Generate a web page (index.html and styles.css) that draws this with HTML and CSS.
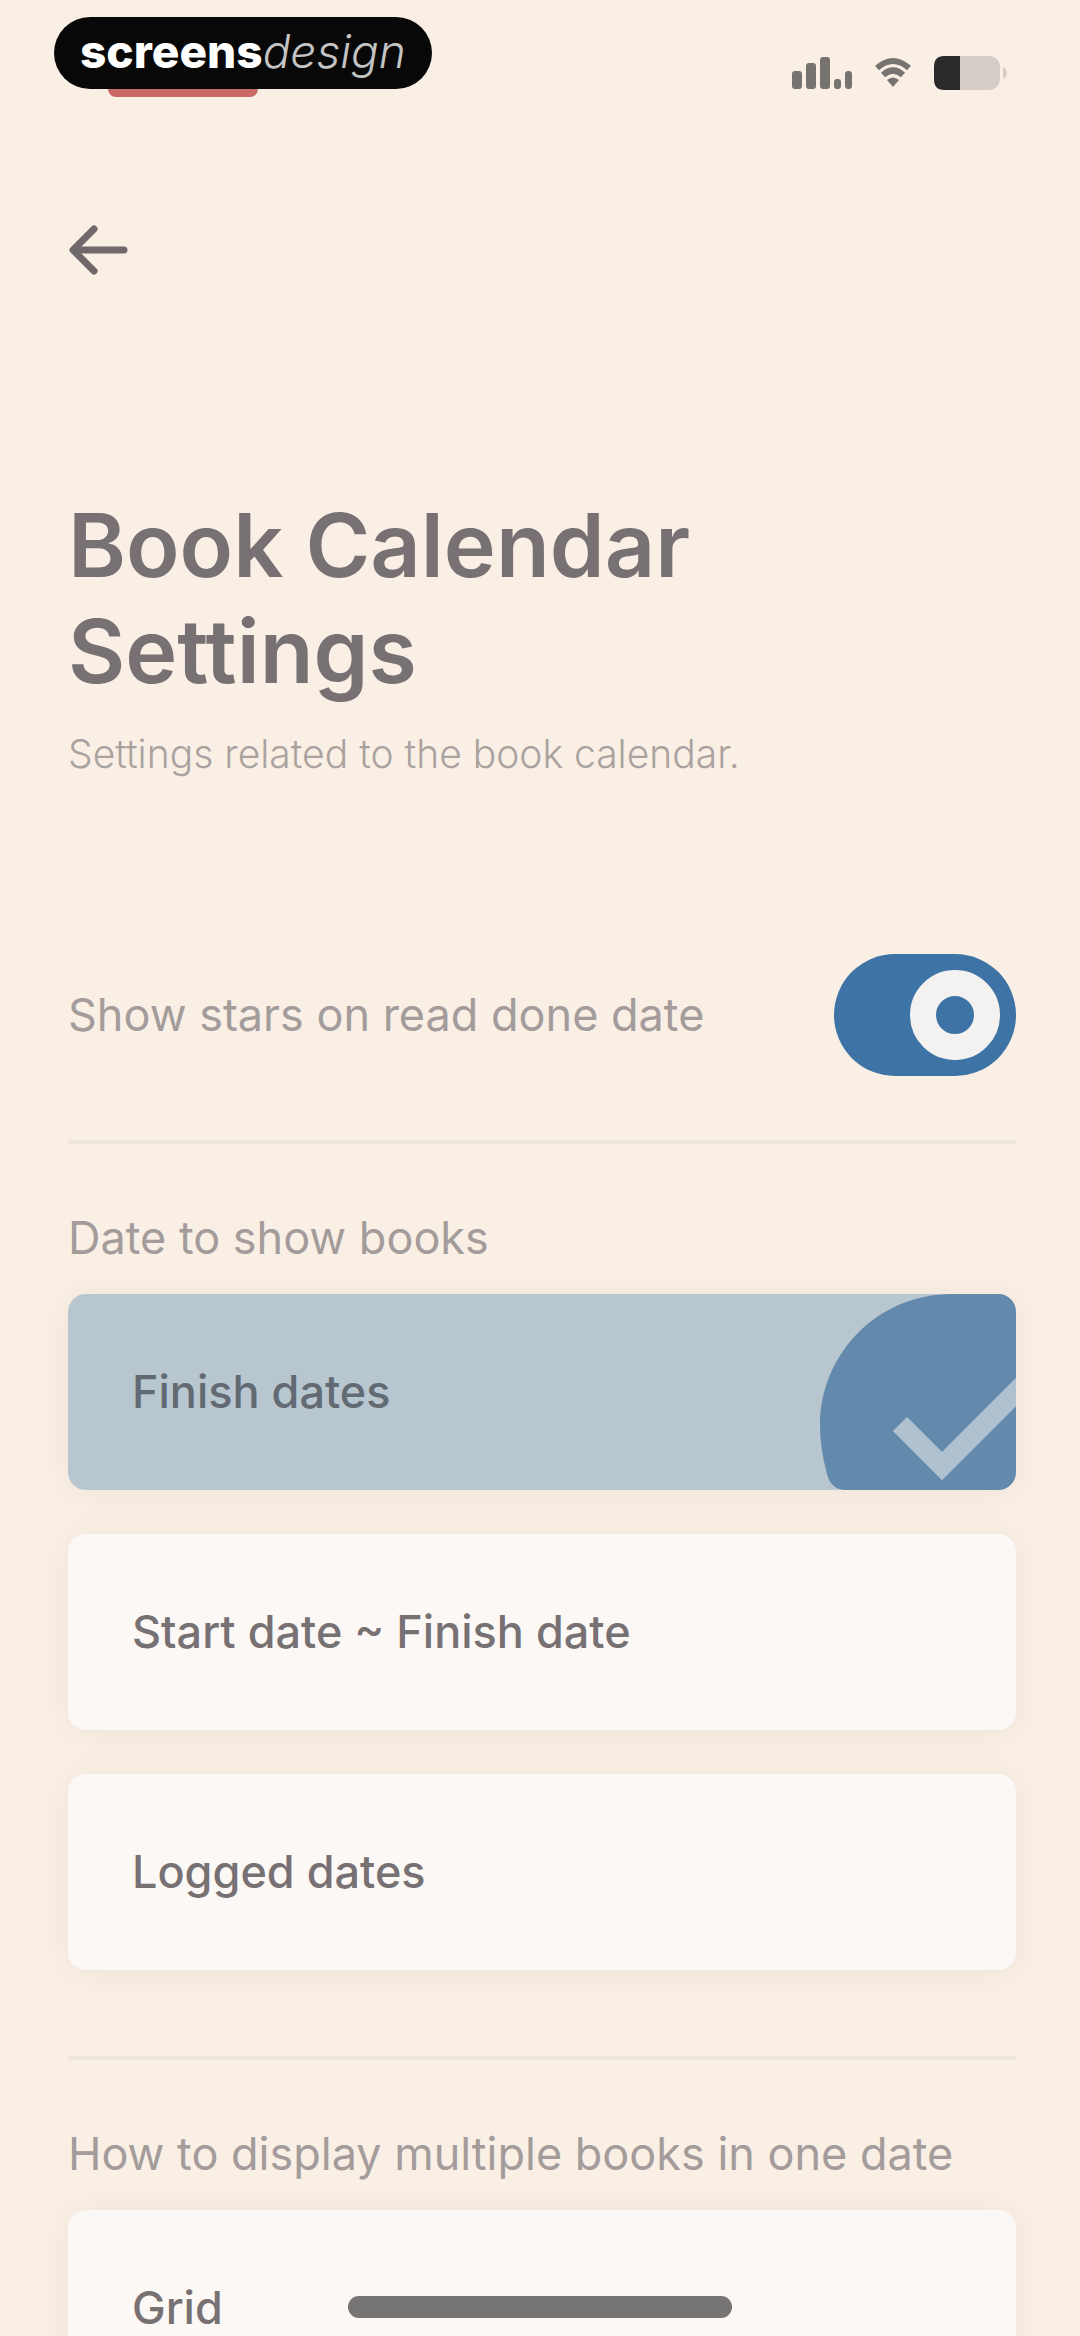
FILE: index.html
```html
<!doctype html>
<html lang="en">
<head>
  <meta charset="UTF-8" />
  <meta name="viewport" content="width=device-width, initial-scale=1.0" />
  <title>Book Calendar Settings</title>
  <link rel="stylesheet" href="styles.css">
</head>
<body>
  <div class="screen">
    <header class="status-bar">
      <div class="brand"><strong>screens</strong><em>design</em></div>
      <div class="status-icons">
        <svg class="signal" viewBox="0 0 62 36" aria-hidden="true">
          <rect x="0" y="16" width="10" height="18" rx="3" />
          <rect x="14" y="8" width="10" height="26" rx="3" />
          <rect x="28" y="2" width="10" height="32" rx="3" />
          <rect x="42" y="24" width="7" height="10" rx="3" />
          <rect x="53" y="16" width="7" height="18" rx="3" />
        </svg>
        <svg class="wifi" viewBox="0 0 38 32" aria-hidden="true">
          <path d="M3 11 Q19 -3 35 11 M9 18 Q19 9 29 18" />
          <path class="dot" d="M13 23 Q19 18 25 23 L19 30 Z" />
        </svg>
        <svg class="battery" viewBox="0 0 76 38" aria-hidden="true">
          <rect class="battery-body" x="2" y="2" width="66" height="34" rx="11" />
          <path class="battery-level" d="M28 2 H12 Q2 2 2 13 V25 Q2 36 12 36 H28 Z" />
          <path class="battery-cap" d="M71 13 Q75 15 75 19 Q75 23 71 25 Z" />
        </svg>
      </div>
    </header>

    <nav class="top-nav">
      <button type="button" class="back-btn" aria-label="Back">
        <svg viewBox="0 0 60 52" aria-hidden="true">
          <path d="M56 26 H6 M26 5 L5 26 L26 47" />
        </svg>
      </button>
    </nav>

    <main class="content">
      <h1>Book Calendar<br />Settings</h1>
      <p class="subtitle">Settings related to the book calendar.</p>

      <div class="toggle-row">
        <label for="show-stars">Show stars on read done date</label>
        <input type="checkbox" id="show-stars" class="toggle" checked />
      </div>

      <hr />

      <fieldset class="option-group">
        <legend>Date to show books</legend>
        <label class="option">
          <input type="radio" name="date-mode" value="finish" checked />
          <span>Finish dates</span>
          <svg class="check" viewBox="0 0 196 196" aria-hidden="true">
            <path class="check-bg" d="M196 0 H132 C58 0 0 59 0 132 Q0 154 7 180 Q11 196 26 196 H196 Z" />
            <path class="check-mark" d="M80 130 L122 172 L204 90" />
          </svg>
        </label>
        <label class="option">
          <input type="radio" name="date-mode" value="range" />
          <span>Start date ~ Finish date</span>
        </label>
        <label class="option">
          <input type="radio" name="date-mode" value="logged" />
          <span>Logged dates</span>
        </label>
      </fieldset>

      <hr />

      <fieldset class="option-group">
        <legend>How to display multiple books in one date</legend>
        <label class="option">
          <input type="radio" name="display-mode" value="grid" />
          <span>Grid</span>
        </label>
      </fieldset>
    </main>
  </div>

  <div class="home-indicator"></div>
</body>
</html>
```
FILE: styles.css
```css
* {
  box-sizing: border-box;
  margin: 0;
  padding: 0;
}

body {
  font-family: Inter, 'Liberation Sans', sans-serif;
  background: #f9efe5;
  color: #777174;
}

.screen {
  height: 100vh;
  overflow-y: auto;
  scrollbar-width: none;
}

/* ===== Status bar ===== */
.status-bar {
  display: flex;
  justify-content: space-between;
  align-items: center;
  padding: 14px 72px 0 54px;
}

.brand {
  position: relative;
  display: flex;
  align-items: center;
  height: 72px;
  padding: 0 26px 4px;
  border-radius: 36px;
  background: #080808;
  color: #fff;
  font-size: 46px;
  line-height: 48px;
}

.brand strong {
  font-weight: 800;
}

.brand em {
  font-weight: 300;
  color: #c4c4c4;
}

/* red tab peeking out below the badge */
.brand::after {
  content: "";
  position: absolute;
  left: 54px;
  top: 72px;
  width: 150px;
  height: 8px;
  border-radius: 0 0 8px 8px;
  background: #c96a68;
}

.status-icons {
  display: flex;
  align-items: center;
  gap: 20px;
  padding-top: 40px;
}

.status-icons svg {
  display: block;
  fill: #77746f;
}

.signal {
  width: 62px;
  height: 36px;
}

.wifi {
  width: 38px;
  height: 32px;
}

.wifi path {
  fill: none;
  stroke: #77746f;
  stroke-width: 6;
}

.wifi .dot {
  fill: #77746f;
  stroke: none;
}

.battery {
  width: 76px;
  height: 38px;
}

.status-icons .battery-body,
.status-icons .battery-cap {
  fill: #d6cdc8;
}

.status-icons .battery-level {
  fill: #2b2a2a;
}

/* ===== Back button ===== */
.top-nav {
  padding: 132px 68px 0;
}

.back-btn {
  display: block;
  background: none;
  border: none;
  cursor: pointer;
}

.back-btn svg {
  display: block;
  width: 60px;
  height: 52px;
  fill: none;
  stroke: #6f696b;
  stroke-width: 7;
  stroke-linecap: round;
  stroke-linejoin: round;
}

/* ===== Content ===== */
.content {
  padding: 216px 64px 60px 68px;
}

h1 {
  font-size: 88px;
  line-height: 106px;
  font-weight: 600;
}

.subtitle {
  margin-top: 26px;
  font-size: 39px;
  line-height: 48px;
  font-weight: 300;
  color: #aaa29f;
}

.toggle-row {
  display: flex;
  align-items: center;
  justify-content: space-between;
  margin-top: 176px;
  font-size: 45px;
  line-height: 48px;
  color: #a39c9b;
}

.toggle {
  appearance: none;
  display: flex;
  align-items: center;
  justify-content: flex-end;
  width: 182px;
  height: 122px;
  padding: 16px;
  border-radius: 61px;
  background: #3d74a5;
  cursor: pointer;
}

.toggle::before {
  content: "";
  box-sizing: border-box;
  width: 90px;
  height: 90px;
  border: 26px solid #f4f2f0;
  border-radius: 50%;
}

.toggle:not(:checked) {
  justify-content: flex-start;
  background: #c9c2be;
}

hr {
  margin: 64px 0 70px;
  border: none;
  border-top: 4px solid #eee5dc;
}

.option-group {
  display: flex;
  flex-direction: column;
  gap: 44px;
  border: none;
}

.option-group + hr {
  margin-top: 86px;
}

.option-group legend {
  margin-bottom: 32px;
  font-size: 45px;
  line-height: 48px;
  color: #a39c9b;
}

.option {
  position: relative;
  display: flex;
  align-items: center;
  height: 196px;
  padding: 0 64px;
  overflow: hidden;
  border-radius: 18px;
  background: #fcf8f5;
  box-shadow: 0 2px 32px rgba(120, 100, 90, 0.08);
  font-size: 45px;
  line-height: 48px;
  font-weight: 500;
  cursor: pointer;
}

.option input {
  position: absolute;
  opacity: 0;
}

.option:has(input:checked) {
  background: #b8c6cf;
  color: #626a73;
}

.check {
  position: absolute;
  right: 0;
  top: 0;
  width: 196px;
  height: 196px;
}

.check-bg {
  fill: #6389ad;
}

.check-mark {
  fill: none;
  stroke: #b0c1d0;
  stroke-width: 20;
}

.home-indicator {
  position: fixed;
  left: 50%;
  bottom: 18px;
  width: 384px;
  height: 22px;
  transform: translateX(-50%);
  border-radius: 11px;
  background: #777474;
}
```
